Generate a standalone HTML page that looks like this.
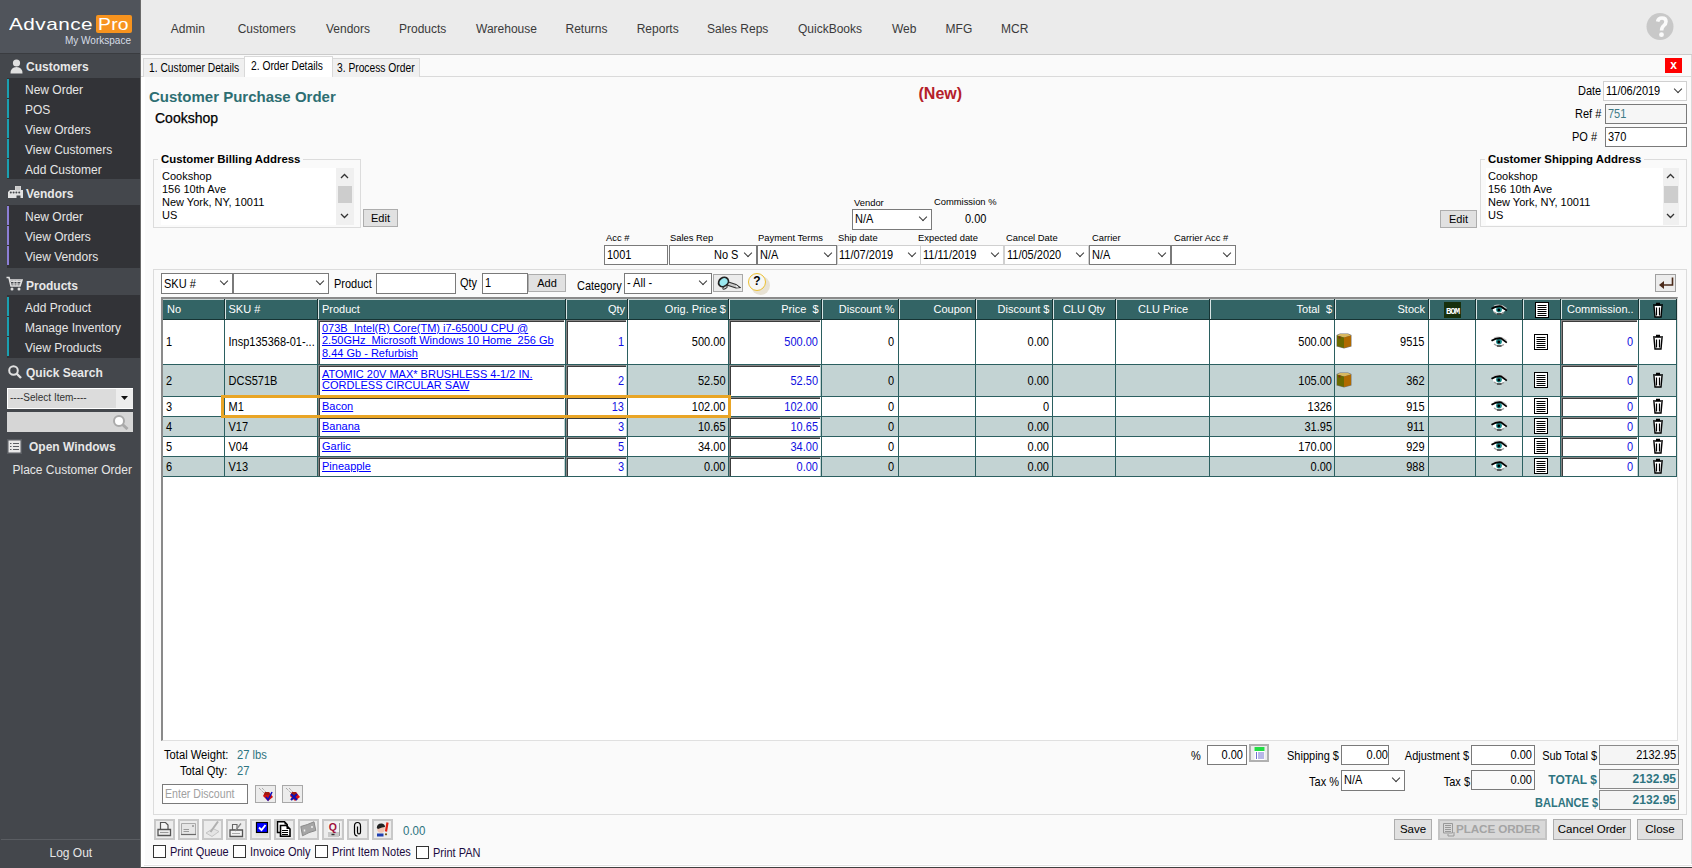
<!DOCTYPE html>
<html><head><meta charset="utf-8">
<style>
*{box-sizing:border-box;margin:0;padding:0}
html,body{width:1692px;height:868px;overflow:hidden;background:#fafafa;font-family:"Liberation Sans",sans-serif;font-size:11px;color:#000}
.a{position:absolute;white-space:nowrap}
/* sidebar */
#sb{position:absolute;left:0;top:0;width:141px;height:868px;background:#44474c;border-right:1px solid #6a6a6a}
#logo{position:absolute;left:0;top:0;width:140px;height:54px;background:#50545b;border-bottom:1px solid #3a3c40}
.sh{position:absolute;left:0;width:140px;color:#e8e8e8;font-weight:bold;font-size:12px}
.sm{position:absolute;left:7px;width:133px;background:#323337}
.si{position:absolute;left:0;width:133px;height:19px;border-left:2px solid #1aa0b0;color:#e6e6e6;font-size:12px;padding-left:16px;padding-top:2px;line-height:19px}
.sm.v .si{border-left-color:#8c7ed6}
/* header */
#hd{position:absolute;left:141px;top:0;width:1551px;height:55px;background:#ebebeb;border-bottom:1px solid #cbcbcb}
.nav{position:absolute;top:21.5px;font-size:12px;color:#3a3a3a}
/* content */
#tabs{position:absolute;left:141px;top:55px;width:1550px;height:22px;background:#fafafa;border-bottom:1px solid #dadada}
.tab{position:absolute;white-space:nowrap;top:3px;height:19px;background:#f0f0f0;border:1px solid #d9d9d9;border-bottom:none;font-size:12px;line-height:18px;padding-left:6px}
.tb{position:absolute;background:#fff;border:1px solid #7a7a7a}
.tbl{position:absolute;background:#fff;border:1px solid #d0d0d0}
.lbl9{position:absolute;font-size:9.4px;color:#000;white-space:nowrap}
.dd{position:absolute;width:6px;height:6px;border-right:1px solid #3a3a3a;border-bottom:1px solid #3a3a3a;transform:rotate(45deg)}
.btn{position:absolute;white-space:nowrap;background:#e1e1e1;border:1px solid #adadad;text-align:center;font-size:11px}
.grp{position:absolute;border:1px solid #dcdcdc}
.cx{display:inline-block;transform:scaleX(.855);transform-origin:0 50%}
.ht{color:#fff;font-size:11px}
.tx{transform:scaleY(1.13) translateY(0.2px)}
.lk{color:#0000ff;font-size:11px}
.lk u{text-decoration:underline;text-underline-offset:1px}
</style></head><body>
<!-- SIDEBAR -->
<div id="sb">
  <div id="logo">
    <div class="a" style="left:8.5px;top:15px;font-size:17px;letter-spacing:0.4px;color:#fff;transform:scaleX(1.22);transform-origin:0 0">Advance</div>
    <div class="a" style="left:96px;top:15px;width:36px;height:18px;background:#f7931e;border-radius:2px"></div>
    <div class="a" style="left:97.5px;top:15px;font-size:17px;letter-spacing:0.2px;color:#fff;transform:scaleX(1.14);transform-origin:0 0">Pro</div>
    <div class="a" style="left:65px;top:35px;font-size:10px;color:#d6dde6">My Workspace</div>
  </div>
  
  <svg class="a" style="left:10px;top:59px" width="13" height="15" viewBox="0 0 13 15"><circle cx="6.5" cy="4" r="3.6" fill="#e0e0e0"/><path d="M0.5 14.5 Q0.5 8 6.5 8 Q12.5 8 12.5 14.5 Z" fill="#e0e0e0"/></svg>
  <svg class="a" style="left:7px;top:185px" width="17" height="14" viewBox="0 0 17 14"><path d="M1 7L3 5H16V13H1Z" fill="#e2e2e2"/><rect x="8" y="1" width="6" height="4.5" fill="#d4d4d4"/><path d="M10 1.5V5M12 1.5V5" stroke="#b8b8b8" stroke-width="0.8"/><circle cx="3.8" cy="7.4" r="1" fill="#45484c"/><circle cx="6.6" cy="7.4" r="1" fill="#45484c"/><circle cx="9.4" cy="7.4" r="1" fill="#45484c"/><circle cx="12.2" cy="7.4" r="1" fill="#45484c"/><rect x="9.5" y="10.5" width="4" height="2.5" fill="#45484c"/></svg>
  <svg class="a" style="left:6px;top:276px" width="17" height="15" viewBox="0 0 17 15"><path d="M0.5 1.5H3L5 10H14L16 4H4" fill="none" stroke="#e0e0e0" stroke-width="1.6"/><path d="M5 5.5H15M5.5 8H14.5M8 4V10M11 4V10" stroke="#e0e0e0" stroke-width="1"/><circle cx="6" cy="13" r="1.5" fill="#e0e0e0"/><circle cx="13" cy="13" r="1.5" fill="#e0e0e0"/></svg>
  <svg class="a" style="left:8px;top:365px" width="14" height="14" viewBox="0 0 14 14"><circle cx="5.5" cy="5.5" r="4.3" fill="none" stroke="#e0e0e0" stroke-width="2"/><path d="M8.5 8.5L13 13" stroke="#e0e0e0" stroke-width="2.4"/></svg>
  <svg class="a" style="left:112px;top:414px;z-index:1" width="17" height="16" viewBox="0 0 17 16"><circle cx="7" cy="7" r="5" fill="#fff" stroke="#aaa" stroke-width="2"/><path d="M10.5 10.5L15.5 15" stroke="#aaa" stroke-width="3"/></svg>
  <svg class="a" style="left:7px;top:439px" width="15" height="15" viewBox="0 0 15 15"><rect width="15" height="15" fill="#5a5d62"/><rect x="1.5" y="1.5" width="12" height="12" fill="#e8e8e8"/><path d="M3 4.5H4.5M6 4.5H12M3 7.5H4.5M6 7.5H12M3 10.5H4.5M6 10.5H12" stroke="#5a5d62" stroke-width="1.2"/></svg>
  <div class="sh" style="top:54px;height:24px"><span class="a" style="left:26px;top:5.5px">Customers</span></div>
  <div class="sm" style="top:78px;height:101px">
    <div class="si" style="top:1px">New Order</div>
    <div class="si" style="top:21px">POS</div>
    <div class="si" style="top:41px">View Orders</div>
    <div class="si" style="top:61px">View Customers</div>
    <div class="si" style="top:81px">Add Customer</div>
  </div>
  <div class="sh" style="top:179px;height:26px"><span class="a" style="left:26px;top:8px">Vendors</span></div>
  <div class="sm v" style="top:205px;height:63px">
    <div class="si" style="top:1px">New Order</div>
    <div class="si" style="top:21px">View Orders</div>
    <div class="si" style="top:41px">View Vendors</div>
  </div>
  <div class="sh" style="top:268px;height:27px"><span class="a" style="left:26px;top:10.5px">Products</span></div>
  <div class="sm" style="top:295px;height:63px">
    <div class="si" style="top:2px">Add Product</div>
    <div class="si" style="top:22px">Manage Inventory</div>
    <div class="si" style="top:42px">View Products</div>
  </div>
  <div class="sh" style="top:358px;height:28px"><span class="a" style="left:26px;top:8px">Quick Search</span></div>
  <div class="a" style="left:7px;top:388px;width:126px;height:21px;background:#dcdcdc;border:1px solid #fff"></div>
  <div class="a" style="left:10px;top:392px;font-size:10px;color:#333">----Select Item----</div>
  <div class="a" style="left:116px;top:389px;width:17px;height:19px;background:#ededed"></div>
  <svg class="a" style="left:121px;top:396px" width="7" height="4" viewBox="0 0 7 4"><path d="M0 0H7L3.5 4Z" fill="#111"/></svg>
  <div class="a" style="left:7px;top:412px;width:126px;height:20px;background:#d6d6d6"></div>
  <div class="sh" style="top:436px;height:22px"><span class="a" style="left:29px;top:4px">Open Windows</span></div>
  <div class="a" style="left:12.5px;top:462.5px;font-size:12px;color:#e6e6e6">Place Customer Order</div>
  <div class="a" style="left:1px;top:839px;width:139px;height:29px;border-top:1px solid #5a5d62"></div>
  <div class="a" style="left:49.5px;top:846px;font-size:12px;color:#e6e6e6">Log Out</div>
</div>
<!-- HEADER -->
<div id="hd">
  <div class="nav" style="left:29.8px">Admin</div>
  <div class="nav" style="left:96.7px">Customers</div>
  <div class="nav" style="left:185.0px">Vendors</div>
  <div class="nav" style="left:258.0px">Products</div>
  <div class="nav" style="left:335.0px">Warehouse</div>
  <div class="nav" style="left:424.5px">Returns</div>
  <div class="nav" style="left:495.7px">Reports</div>
  <div class="nav" style="left:566.0px">Sales Reps</div>
  <div class="nav" style="left:657.0px">QuickBooks</div>
  <div class="nav" style="left:751.0px">Web</div>
  <div class="nav" style="left:804.6px">MFG</div>
  <div class="nav" style="left:860.0px">MCR</div>
  <svg class="a" style="left:1505px;top:13px" width="28" height="28" viewBox="0 0 28 28"><circle cx="14" cy="13.5" r="13.5" fill="#c8c8c8"/><path d="M11.6 8.6 Q12.3 5 16 5 Q20 5 20 8.6 Q20 11 17.8 12.6 Q15.6 14.2 15.6 17.6" fill="none" stroke="#fafafa" stroke-width="3.6"/><circle cx="15.5" cy="21.7" r="2.4" fill="#fafafa"/></svg>
</div>

<!-- TABS -->
<div id="tabs">
  <div class="tab" style="left:2px;width:102px"><span class="cx" style="margin-left:-1px">1. Customer Details</span></div>
  <div class="tab" style="left:103px;top:1px;width:89px;height:21px;background:#fff;z-index:2;line-height:18px"><span class="cx">2. Order Details</span></div>
  <div class="tab" style="left:191px;width:88px;padding-left:4px"><span class="cx">3. Process Order</span></div>
  <div class="a" style="left:1524px;top:3px;width:17px;height:15px;background:#f00;color:#fff;font-size:12px;font-weight:bold;text-align:center;line-height:14px">x</div>
</div>
<!-- FORM HEADER -->
<div class="a" style="left:149px;top:88px;font-size:15px;font-weight:bold;color:#2d6e72">Customer Purchase Order</div>
<div class="a" style="left:155px;top:110px;font-size:14px;color:#000;-webkit-text-stroke:0.25px #000">Cookshop</div>
<div class="a" style="left:918.5px;top:85px;font-size:16px;font-weight:bold;color:#b5202a">(New)</div>
<div class="a tx" style="left:1578px;top:84px;font-size:11px">Date</div>
<div class="tbl" style="left:1603px;top:81px;width:84px;height:20px"></div>
<div class="a tx" style="left:1606px;top:84px;font-size:11px">11/06/2019</div>
<div class="dd" style="left:1675px;top:85.5px"></div>
<div class="a tx" style="left:1575px;top:107px;font-size:11px">Ref #</div>
<div class="tb" style="left:1605px;top:104px;width:82px;height:20px;background:#f6f6f6"></div>
<div class="a tx" style="left:1608px;top:107px;font-size:11px;color:#3e7a86">751</div>
<div class="a tx" style="left:1572px;top:130px;font-size:11px">PO #</div>
<div class="tb" style="left:1605px;top:127px;width:82px;height:20px"></div>
<div class="a tx" style="left:1608px;top:130px;font-size:11px">370</div>

<!-- BILLING -->
<div class="grp" style="left:153px;top:159px;width:208px;height:69px"></div>
<div class="a" style="left:158px;top:153px;padding:0 3px;background:#fafafa;font-size:11.4px;font-weight:bold">Customer Billing Address</div>
<div class="a" style="left:161px;top:168px;width:193px;height:57px;background:#fff"></div>
<div class="a" style="left:162px;top:170px;font-size:11px;line-height:13px">Cookshop<br>156 10th Ave<br>New York, NY, 10011<br>US</div>
<div class="a" style="left:336px;top:168px;width:18px;height:57px;background:#f0f0f0"></div>
<div class="a" style="left:338px;top:186px;width:14px;height:17px;background:#cdcdcd"></div>
<div class="btn" style="left:363px;top:209px;width:35px;height:18px;line-height:16px">Edit</div>
<!-- SHIPPING -->
<div class="grp" style="left:1480px;top:159px;width:207px;height:68px"></div>
<div class="a" style="left:1485px;top:153px;padding:0 3px;background:#fafafa;font-size:11.4px;font-weight:bold">Customer Shipping Address</div>
<div class="a" style="left:1486px;top:168px;width:193px;height:57px;background:#fff"></div>
<div class="a" style="left:1488px;top:170px;font-size:11px;line-height:13px">Cookshop<br>156 10th Ave<br>New York, NY, 10011<br>US</div>
<div class="a" style="left:1663px;top:168px;width:16px;height:57px;background:#f0f0f0"></div>
<div class="a" style="left:1664px;top:186px;width:14px;height:17px;background:#cdcdcd"></div>
<div class="btn" style="left:1440px;top:210px;width:37px;height:18px;line-height:16px">Edit</div>

<svg class="a" style="left:340px;top:173px" width="9" height="6" viewBox="0 0 9 6"><path d="M1 5L4.5 1.5L8 5" fill="none" stroke="#333" stroke-width="1.3"/></svg>
<svg class="a" style="left:340px;top:213px" width="9" height="6" viewBox="0 0 9 6"><path d="M1 1L4.5 4.5L8 1" fill="none" stroke="#333" stroke-width="1.3"/></svg>
<svg class="a" style="left:1666px;top:173px" width="9" height="6" viewBox="0 0 9 6"><path d="M1 5L4.5 1.5L8 5" fill="none" stroke="#333" stroke-width="1.3"/></svg>
<svg class="a" style="left:1666px;top:213px" width="9" height="6" viewBox="0 0 9 6"><path d="M1 1L4.5 4.5L8 1" fill="none" stroke="#333" stroke-width="1.3"/></svg>
<!-- VENDOR -->
<div class="lbl9" style="left:854px;top:197px">Vendor</div>
<div class="tb" style="left:852px;top:209px;width:80px;height:21px"></div>
<div class="a tx" style="left:855px;top:212px">N/A</div>
<div class="dd" style="left:920px;top:214.0px"></div>
<div class="lbl9" style="left:934px;top:196px">Commission %</div>
<div class="a tx" style="left:965px;top:212px">0.00</div>
<!-- FIELD ROW -->
<div class="lbl9" style="left:606px;top:232px">Acc #</div>
<div class="tb" style="left:604px;top:245px;width:64px;height:20px"></div>
<div class="a tx" style="left:607px;top:248px">1001</div>
<div class="lbl9" style="left:670px;top:232px">Sales Rep</div>
<div class="tb" style="left:669px;top:245px;width:88px;height:20px"></div>
<div class="a tx" style="left:714px;top:248px">No S</div>
<div class="dd" style="left:745px;top:249.5px"></div>
<div class="lbl9" style="left:758px;top:232px">Payment Terms</div>
<div class="tb" style="left:757px;top:245px;width:80px;height:20px"></div>
<div class="a tx" style="left:760px;top:248px">N/A</div>
<div class="dd" style="left:825px;top:249.5px"></div>
<div class="lbl9" style="left:838px;top:232px">Ship date</div>
<div class="tbl" style="left:837px;top:245px;width:84px;height:20px"></div>
<div class="a tx" style="left:839px;top:248px">11/07/2019</div>
<div class="dd" style="left:909px;top:249.5px"></div>
<div class="lbl9" style="left:918px;top:232px">Expected date</div>
<div class="tbl" style="left:920px;top:245px;width:84px;height:20px"></div>
<div class="a tx" style="left:923px;top:248px">11/11/2019</div>
<div class="dd" style="left:992px;top:249.5px"></div>
<div class="lbl9" style="left:1006px;top:232px">Cancel Date</div>
<div class="tbl" style="left:1004px;top:245px;width:85px;height:20px"></div>
<div class="a tx" style="left:1007px;top:248px">11/05/2020</div>
<div class="dd" style="left:1077px;top:249.5px"></div>
<div class="lbl9" style="left:1092px;top:232px">Carrier</div>
<div class="tb" style="left:1089px;top:245px;width:82px;height:20px"></div>
<div class="a tx" style="left:1092px;top:248px">N/A</div>
<div class="dd" style="left:1159px;top:249.5px"></div>
<div class="lbl9" style="left:1174px;top:232px">Carrier Acc #</div>
<div class="tb" style="left:1171px;top:245px;width:65px;height:20px"></div>
<div class="dd" style="left:1224px;top:249.5px"></div>
<!-- TOOLBAR GROUP -->
<div class="grp" style="left:153px;top:269px;width:1534px;height:546px"></div>
<div class="tb" style="left:161px;top:273px;width:72px;height:21px"></div>
<div class="a tx" style="left:164px;top:277px">SKU #</div>
<div class="dd" style="left:221px;top:278.0px"></div>
<div class="tb" style="left:233px;top:273px;width:96px;height:21px"></div>
<div class="dd" style="left:317px;top:278.0px"></div>
<div class="a tx" style="left:334px;top:277px">Product</div>
<div class="tb" style="left:376px;top:273px;width:80px;height:21px"></div>
<div class="a tx" style="left:460px;top:276px">Qty</div>
<div class="tb" style="left:482px;top:273px;width:46px;height:21px"></div>
<div class="a tx" style="left:485px;top:276px">1</div>
<div class="btn" style="left:528px;top:274px;width:38px;height:18px;line-height:16px">Add</div>
<div class="a tx" style="left:577px;top:279px">Category</div>
<div class="tb" style="left:624px;top:273px;width:88px;height:21px"></div>
<div class="a tx" style="left:627px;top:276px">- All -</div>
<div class="dd" style="left:700px;top:278.0px"></div>
<div class="btn" style="left:713px;top:274px;width:30px;height:18px;border:1px solid #a8a8a8;background:#ececec"><svg style="position:absolute;left:3px;top:1px" width="24" height="15" viewBox="0 0 24 15"><path d="M10 5.5L19 8.5L23 11.5L19 12L10 9Z" fill="#c8c8c8" stroke="#333" stroke-width="1.1"/><path d="M19 9L22 11.5L19.5 11.5Z" fill="#fff"/><ellipse cx="6.5" cy="6" rx="5.2" ry="4.3" transform="rotate(-35 6.5 6)" fill="#9be8f0" stroke="#222" stroke-width="1.7"/><ellipse cx="8" cy="11.5" rx="2.5" ry="1.2" transform="rotate(-30 8 11.5)" fill="#ddd" stroke="#333" stroke-width="1"/></svg></div>
<div class="a" style="left:751px;top:276px;width:19px;height:19px;border-radius:50%;background:#e8e2d4"></div><div class="a" style="left:748px;top:273px;width:18px;height:18px;border-radius:50%;border:1.5px solid #ecc032;background:#f6f6f6;font-size:12px;font-weight:bold;text-align:center;line-height:15px">?</div>
<div class="btn" style="left:1655px;top:274px;width:21px;height:18px;border:1px solid #a0a0a0;background:#ececec"><svg style="position:absolute;left:2px;top:1px" width="16" height="14" viewBox="0 0 16 14"><path d="M14.5 1.5V9H5" fill="none" stroke="#4a2a1a" stroke-width="1.6"/><path d="M1 9L6 5V13Z" fill="#4a2a1a"/></svg></div>

<!-- BOTTOM -->
<div class="a tx" style="left:164px;top:748px;font-size:11.2px">Total Weight:</div>
<div class="a tx" style="left:237px;top:748px;font-size:11.2px;color:#2e7480">27 lbs</div>
<div class="a tx" style="left:180px;top:764px;font-size:11.2px">Total Qty:</div>
<div class="a tx" style="left:237px;top:764px;font-size:11.2px;color:#2e7480">27</div>
<div class="tb" style="left:162px;top:784px;width:86px;height:20px"></div>
<div class="a tx" style="left:165px;top:787px;font-size:10.6px;color:#a0a0a0">Enter Discount</div>
<div class="btn" style="left:255px;top:785px;width:21px;height:18px;border:1px solid #a8a8a8;background:#ececec"><svg style="position:absolute;left:2px;top:1px" width="16" height="15" viewBox="0 0 16 15"><path d="M1 1L6 6M4 1L9 6" stroke="#777" stroke-width="0.8" stroke-dasharray="1 1"/><path d="M7 5L11 5L15 10L10 14L5 9Z" fill="#d01010"/><path d="M7 5L11 5L12 8L6 8Z" fill="#a01a10"/><path d="M8 10L10 13L14 5" fill="none" stroke="#1010c0" stroke-width="1.6"/></svg></div>
<div class="btn" style="left:282px;top:785px;width:21px;height:18px;border:1px solid #a8a8a8;background:#ececec"><svg style="position:absolute;left:2px;top:1px" width="16" height="15" viewBox="0 0 16 15"><path d="M1 1L6 6M4 1L9 6" stroke="#777" stroke-width="0.8" stroke-dasharray="1 1"/><path d="M7 5L11 5L15 10L10 14L5 9Z" fill="#e01010"/><path d="M7 5L11 5L12 8L6 8Z" fill="#a01a10"/><path d="M6 7L12 13M12 7L6 13" stroke="#1010b0" stroke-width="2.2"/></svg></div>
<div class="a tx" style="left:1191px;top:749px">%</div>
<div class="tb" style="left:1207px;top:745px;width:40px;height:20px"></div>
<div class="a tx" style="right:449px;top:748px">0.00</div>
<div class="btn" style="left:1249px;top:744px;width:20px;height:18px;border:2px solid #b0b0b0;background:#ececec"><svg style="position:absolute;left:3px;top:1px" width="12" height="13" viewBox="0 0 12 13"><rect x="0.5" y="0" width="10" height="13" fill="#fff"/><rect x="0.5" y="0" width="10" height="4" fill="#22dd44"/><path d="M2.5 5V12M5 5V12M7 5V12M9 5V12" stroke="#7070d0" stroke-width="1"/></svg></div>
<div class="a tx" style="right:353px;top:749px">Shipping $</div>
<div class="tb" style="left:1341px;top:745px;width:48px;height:20px"></div>
<div class="a tx" style="right:304px;top:748px">0.00</div>
<div class="a tx" style="right:223px;top:749px">Adjustment $</div>
<div class="tb" style="left:1471px;top:745px;width:64px;height:20px"></div>
<div class="a tx" style="right:160px;top:748px">0.00</div>
<div class="a tx" style="right:95px;top:749px">Sub Total $</div>
<div class="tb" style="left:1599px;top:745px;width:80px;height:20px;background:#f5f5f5;border-color:#8a8a8a"></div>
<div class="a tx" style="right:16px;top:748px">2132.95</div>
<div class="a tx" style="right:353px;top:775px">Tax %</div>
<div class="tb" style="left:1341px;top:770px;width:64px;height:21px"></div>
<div class="a tx" style="left:1344px;top:773px">N/A</div>
<div class="dd" style="left:1393px;top:775.0px"></div>
<div class="a tx" style="right:222px;top:775px">Tax $</div>
<div class="tb" style="left:1471px;top:770px;width:64px;height:20px;background:#fafafa"></div>
<div class="a tx" style="right:160px;top:773px">0.00</div>
<div class="a tx" style="right:95px;top:772px;font-size:12px;font-weight:bold;color:#2e7480">TOTAL $</div>
<div class="tb" style="left:1599px;top:769px;width:80px;height:20px;background:#f5f5f5;border-color:#8a8a8a"></div>
<div class="a tx" style="right:16px;top:771px;font-size:12px;font-weight:bold;color:#2e7480">2132.95</div>
<div class="a tx" style="right:94px;top:796px;font-size:11px;font-weight:bold;color:#2e7480">BALANCE $</div>
<div class="tb" style="left:1599px;top:790px;width:80px;height:20px;background:#f5f5f5;border-color:#8a8a8a"></div>
<div class="a tx" style="right:16px;top:792px;font-size:12px;font-weight:bold;color:#2e7480">2132.95</div>
<!-- BUTTONS -->
<div class="btn" style="left:1394px;top:819px;width:38px;height:21px;line-height:19px;font-size:11.5px">Save</div>
<div class="btn" style="left:1438px;top:819px;width:109px;height:21px;line-height:15px;border:2px solid #c4c4c4;background:#d8d8d8;color:#a4a4a4;font-weight:bold;font-size:11.7px;text-align:left;padding-left:16px;letter-spacing:-0.1px"><svg style="position:absolute;left:2px;top:1px" width="14" height="16" viewBox="0 0 14 16"><path d="M1.5 1.5H10.5V11H1.5Z" fill="none" stroke="#999" stroke-width="1"/><path d="M3 3.5H9M3 5.5H9M3 7.5H9M3 9.5H9" stroke="#999" stroke-width="1"/><path d="M6 12V14H12V10" fill="none" stroke="#999" stroke-width="1"/></svg>PLACE ORDER</div>
<div class="btn" style="left:1553px;top:819px;width:78px;height:21px;line-height:19px;font-size:11.5px">Cancel Order</div>
<div class="btn" style="left:1637px;top:819px;width:46px;height:21px;line-height:19px;font-size:11.5px">Close</div>
<!-- TOOLBAR ICONS -->
<div class="a" style="left:154px;top:819px;width:21px;height:21px;background:#ececec;border:2px solid #c8c8c8"><svg style="position:absolute;left:0px;top:0px" width="17" height="17" viewBox="0 0 17 17"><path d="M4.5 1.5H9.5L12 4V8.5H4.5Z" fill="#f6f6f6" stroke="#555" stroke-width="1.2"/><path d="M2 8.5H14.5V14.5H2Z" fill="#f2f2f2" stroke="#555" stroke-width="1.3"/><path d="M4 11.5H12.5" fill="none" stroke="#9a9a9a" stroke-width="1.2"/></svg></div>
<div class="a" style="left:178px;top:819px;width:21px;height:21px;background:#ececec;border:2px solid #c8c8c8"><svg style="position:absolute;left:0px;top:0px" width="17" height="17" viewBox="0 0 17 17"><path d="M1.5 2.5H15.5V13.5H1.5Z" fill="#e6e6e6" stroke="#aaa" stroke-width="1"/><path d="M1 13.5H16" fill="none" stroke="#6a6a6a" stroke-width="1.2"/><path d="M3.5 8.5H9M3.5 10.5H9" fill="none" stroke="#9a9a9a" stroke-width="1.1"/><rect x="12" y="4" width="2" height="2" fill="#aaa"/></svg></div>
<div class="a" style="left:202px;top:819px;width:21px;height:21px;background:#ececec;border:2px solid #c8c8c8"><svg style="position:absolute;left:0px;top:0px" width="17" height="17" viewBox="0 0 17 17"><path d="M2 12L8 15.5L15 10.5L9 7.5Z" fill="#e4e4e4" stroke="#c4c4c4" stroke-width="1"/><path d="M6.5 11L14 0.5" fill="none" stroke="#b0b0b0" stroke-width="2"/></svg></div>
<div class="a" style="left:226px;top:819px;width:21px;height:21px;background:#ececec;border:2px solid #c8c8c8"><svg style="position:absolute;left:0px;top:0px" width="17" height="17" viewBox="0 0 17 17"><path d="M4.5 3.5H9V9H4.5Z" fill="#f2f2f2" stroke="#666" stroke-width="1.1"/><path d="M2 9H14.5V15.5H2Z" fill="#f2f2f2" stroke="#555" stroke-width="1.3"/><path d="M7 10L13 2.5" fill="none" stroke="#888" stroke-width="1.3"/><path d="M4 12.5H12" fill="none" stroke="#aaa" stroke-width="1"/></svg></div>
<div class="a" style="left:250px;top:819px;width:21px;height:21px;background:#ececec;border:2px solid #c8c8c8"><svg style="position:absolute;left:0px;top:0px" width="17" height="17" viewBox="0 0 17 17"><rect x="4.5" y="1.5" width="11" height="10" fill="#0000ff" stroke="#000" stroke-width="1.2"/><path d="M7 6.5L9.5 9L13.5 4" fill="none" stroke="#fff" stroke-width="1.9"/><path d="M3.5 12.5H16V15.5H3.5Z" fill="#e4e4dc"/></svg></div>
<div class="a" style="left:274px;top:819px;width:21px;height:21px;background:#ececec;border:2px solid #c8c8c8"><svg style="position:absolute;left:0px;top:0px" width="17" height="17" viewBox="0 0 17 17"><path d="M1.5 0.8H8.5L11.2 3.5V11.5H1.5Z" fill="#fff" stroke="#000" stroke-width="1.5"/><path d="M8.5 0.8L11.2 3.5H8.5Z" fill="#000"/><path d="M4.5 4.5H10.5L14 8V15.2H4.5Z" fill="#fff" stroke="#000" stroke-width="1.6"/><path d="M10.5 4.5L14 8H10.5Z" fill="#000"/><path d="M6 9.5H12M6 11.5H12M6 13.5H12" fill="none" stroke="#000" stroke-width="1.2"/></svg></div>
<div class="a" style="left:298px;top:819px;width:21px;height:21px;background:#ececec;border:2px solid #c8c8c8"><svg style="position:absolute;left:0px;top:0px" width="17" height="17" viewBox="0 0 17 17"><path d="M0.8 5.5Q7 4 14 0.8L15.8 9.5Q9 11 2.5 14.8Z" fill="#a6a6a6" stroke="#8a8a8a" stroke-width="1"/><path d="M4.5 8.5V10.5M12 5V7" fill="none" stroke="#eee" stroke-width="1.5"/></svg></div>
<div class="a" style="left:322px;top:819px;width:22px;height:21px;background:#ececec;border:2px solid #c8c8c8"><svg style="position:absolute;left:0px;top:0px" width="17" height="17" viewBox="0 0 17 17"><rect x="4" y="1" width="13" height="15" fill="#f4f4f4"/><rect x="4" y="11" width="11" height="5" fill="#c8c8c8"/><text x="8.8" y="10" font-family="Liberation Sans" font-size="10.5" font-weight="bold" fill="#a0103a" text-anchor="middle">Q</text><path d="M15.5 2V15" fill="none" stroke="#999" stroke-width="1"/><path d="M7.5 13.5H10.5" fill="none" stroke="#333" stroke-width="1.4"/></svg></div>
<div class="a" style="left:347px;top:819px;width:22px;height:21px;background:#ececec;border:2px solid #c8c8c8"><svg style="position:absolute;left:0px;top:0px" width="17" height="17" viewBox="0 0 17 17"><path d="M8.5 15Q5.5 15 5.5 11.5V5Q5.5 1.5 8.5 1.5Q11.5 1.5 11.5 5V11Q11.5 13 10 13Q8.5 13 8.5 11V5.5" fill="none" stroke="#000" stroke-width="1.2"/></svg></div>
<div class="a" style="left:372px;top:819px;width:21px;height:21px;background:#ececec;border:2px solid #c8c8c8"><svg style="position:absolute;left:0px;top:0px" width="17" height="17" viewBox="0 0 17 17"><circle cx="7" cy="8" r="3.8" fill="#f0c4b4"/><path d="M2.8 7Q3 2 8 2.5Q11 3 11 6L8 6.5L4 8Z" fill="#222"/><path d="M3 12.5H9.5V15.5H3Z" fill="#1f3fb0"/><path d="M13.5 1.5L12 10.5" fill="none" stroke="#e02010" stroke-width="2.2"/><circle cx="12" cy="13.3" r="1.1" fill="#705010"/></svg></div>
<div class="a tx" style="left:403px;top:824px;font-size:11.5px;color:#2e7480">0.00</div>
<div class="a" style="left:153px;top:845px;width:13px;height:13px;background:#fff;border:1px solid #333"></div>
<div class="a tx" style="left:170px;top:845px;font-size:11px;color:#1a0a40">Print Queue</div>
<div class="a" style="left:233px;top:845px;width:13px;height:13px;background:#fff;border:1px solid #333"></div>
<div class="a tx" style="left:250px;top:845px;font-size:11px;color:#1a0a40">Invoice Only</div>
<div class="a" style="left:315px;top:845px;width:13px;height:13px;background:#fff;border:1px solid #333"></div>
<div class="a tx" style="left:332px;top:845px;font-size:11px;color:#1a0a40">Print Item Notes</div>
<div class="a" style="left:416px;top:846px;width:13px;height:13px;background:#fff;border:1px solid #333"></div>
<div class="a tx" style="left:433px;top:846px;font-size:11px;color:#1a0a40">Print PAN</div>
<div class="a" style="left:141px;top:864px;width:1551px;height:4px;background:#fff;border-bottom:1px solid #404040"><div style="position:absolute;left:3px;right:0;top:1px;height:1px;background:#e3e3e3"></div></div>
<div class="a" style="left:141px;top:77px;width:4px;height:787px;background:#fff"></div>
<div class="a" style="left:1691px;top:55px;width:1px;height:809px;background:#dadada"></div>
<!--TABLE-->
<div class="a" style="left:161px;top:297px;width:1517px;height:444px;background:#fff;border-top:2px solid #8a8a8a;border-left:2px solid #8a8a8a;border-right:1px solid #e0e0e0;border-bottom:1px solid #e0e0e0"></div>
<div class="a" style="left:163px;top:299px;width:1514px;height:20px;background:#336465;border-top:1px solid #c8d4d4"></div>
<div class="a" style="left:163px;top:320px;width:1514px;height:44px;background:#fff"></div>
<div class="a" style="left:163px;top:365px;width:1514px;height:31px;background:#c3d3d3"></div>
<div class="a" style="left:163px;top:397px;width:1514px;height:19px;background:#fff"></div>
<div class="a" style="left:163px;top:417px;width:1514px;height:19px;background:#c3d3d3"></div>
<div class="a" style="left:163px;top:437px;width:1514px;height:19px;background:#fff"></div>
<div class="a" style="left:163px;top:457px;width:1514px;height:19px;background:#c3d3d3"></div>
<div class="a" style="left:318px;top:320px;width:246px;height:44px;background:#fff;border-top:1px solid #848484;border-left:1px solid #848484;box-shadow:inset 1px 1px 0 #3c3c3c"></div>
<div class="a" style="left:566px;top:320px;width:60px;height:44px;background:#fff;border-top:1px solid #848484;border-left:1px solid #848484;box-shadow:inset 1px 1px 0 #3c3c3c"></div>
<div class="a" style="left:729px;top:320px;width:91px;height:44px;background:#fff;border-top:1px solid #848484;border-left:1px solid #848484;box-shadow:inset 1px 1px 0 #3c3c3c"></div>
<div class="a" style="left:1561px;top:320px;width:76px;height:44px;background:#fff;border-top:1px solid #848484;border-left:1px solid #848484;box-shadow:inset 1px 1px 0 #3c3c3c"></div>
<div class="a" style="left:318px;top:365px;width:246px;height:31px;background:#fff;border-top:1px solid #848484;border-left:1px solid #848484;box-shadow:inset 1px 1px 0 #3c3c3c"></div>
<div class="a" style="left:566px;top:365px;width:60px;height:31px;background:#fff;border-top:1px solid #848484;border-left:1px solid #848484;box-shadow:inset 1px 1px 0 #3c3c3c"></div>
<div class="a" style="left:729px;top:365px;width:91px;height:31px;background:#fff;border-top:1px solid #848484;border-left:1px solid #848484;box-shadow:inset 1px 1px 0 #3c3c3c"></div>
<div class="a" style="left:1561px;top:365px;width:76px;height:31px;background:#fff;border-top:1px solid #848484;border-left:1px solid #848484;box-shadow:inset 1px 1px 0 #3c3c3c"></div>
<div class="a" style="left:318px;top:397px;width:246px;height:19px;background:#fff;border-top:1px solid #848484;border-left:1px solid #848484;box-shadow:inset 1px 1px 0 #3c3c3c"></div>
<div class="a" style="left:566px;top:397px;width:60px;height:19px;background:#fff;border-top:1px solid #848484;border-left:1px solid #848484;box-shadow:inset 1px 1px 0 #3c3c3c"></div>
<div class="a" style="left:729px;top:397px;width:91px;height:19px;background:#fff;border-top:1px solid #848484;border-left:1px solid #848484;box-shadow:inset 1px 1px 0 #3c3c3c"></div>
<div class="a" style="left:1561px;top:397px;width:76px;height:19px;background:#fff;border-top:1px solid #848484;border-left:1px solid #848484;box-shadow:inset 1px 1px 0 #3c3c3c"></div>
<div class="a" style="left:318px;top:417px;width:246px;height:19px;background:#fff;border-top:1px solid #848484;border-left:1px solid #848484;box-shadow:inset 1px 1px 0 #3c3c3c"></div>
<div class="a" style="left:566px;top:417px;width:60px;height:19px;background:#fff;border-top:1px solid #848484;border-left:1px solid #848484;box-shadow:inset 1px 1px 0 #3c3c3c"></div>
<div class="a" style="left:729px;top:417px;width:91px;height:19px;background:#fff;border-top:1px solid #848484;border-left:1px solid #848484;box-shadow:inset 1px 1px 0 #3c3c3c"></div>
<div class="a" style="left:1561px;top:417px;width:76px;height:19px;background:#fff;border-top:1px solid #848484;border-left:1px solid #848484;box-shadow:inset 1px 1px 0 #3c3c3c"></div>
<div class="a" style="left:318px;top:437px;width:246px;height:19px;background:#fff;border-top:1px solid #848484;border-left:1px solid #848484;box-shadow:inset 1px 1px 0 #3c3c3c"></div>
<div class="a" style="left:566px;top:437px;width:60px;height:19px;background:#fff;border-top:1px solid #848484;border-left:1px solid #848484;box-shadow:inset 1px 1px 0 #3c3c3c"></div>
<div class="a" style="left:729px;top:437px;width:91px;height:19px;background:#fff;border-top:1px solid #848484;border-left:1px solid #848484;box-shadow:inset 1px 1px 0 #3c3c3c"></div>
<div class="a" style="left:1561px;top:437px;width:76px;height:19px;background:#fff;border-top:1px solid #848484;border-left:1px solid #848484;box-shadow:inset 1px 1px 0 #3c3c3c"></div>
<div class="a" style="left:318px;top:457px;width:246px;height:19px;background:#fff;border-top:1px solid #848484;border-left:1px solid #848484;box-shadow:inset 1px 1px 0 #3c3c3c"></div>
<div class="a" style="left:566px;top:457px;width:60px;height:19px;background:#fff;border-top:1px solid #848484;border-left:1px solid #848484;box-shadow:inset 1px 1px 0 #3c3c3c"></div>
<div class="a" style="left:729px;top:457px;width:91px;height:19px;background:#fff;border-top:1px solid #848484;border-left:1px solid #848484;box-shadow:inset 1px 1px 0 #3c3c3c"></div>
<div class="a" style="left:1561px;top:457px;width:76px;height:19px;background:#fff;border-top:1px solid #848484;border-left:1px solid #848484;box-shadow:inset 1px 1px 0 #3c3c3c"></div>
<div class="a" style="left:163px;top:319px;width:1514px;height:1px;background:#163434"></div>
<div class="a" style="left:163px;top:364px;width:1514px;height:1px;background:#2b5f60"></div>
<div class="a" style="left:163px;top:396px;width:1514px;height:1px;background:#2b5f60"></div>
<div class="a" style="left:163px;top:416px;width:1514px;height:1px;background:#2b5f60"></div>
<div class="a" style="left:163px;top:436px;width:1514px;height:1px;background:#2b5f60"></div>
<div class="a" style="left:163px;top:456px;width:1514px;height:1px;background:#2b5f60"></div>
<div class="a" style="left:163px;top:476px;width:1514px;height:1px;background:#2b5f60"></div>
<div class="a" style="left:224px;top:320px;width:1px;height:157px;background:#2b5f60"></div>
<div class="a" style="left:224px;top:299px;width:1px;height:21px;background:#163434"></div>
<div class="a" style="left:225px;top:300px;width:1px;height:19px;background:#d8e4e4"></div>
<div class="a" style="left:317px;top:320px;width:1px;height:157px;background:#2b5f60"></div>
<div class="a" style="left:317px;top:299px;width:1px;height:21px;background:#163434"></div>
<div class="a" style="left:318px;top:300px;width:1px;height:19px;background:#d8e4e4"></div>
<div class="a" style="left:565px;top:320px;width:1px;height:157px;background:#2b5f60"></div>
<div class="a" style="left:565px;top:299px;width:1px;height:21px;background:#163434"></div>
<div class="a" style="left:566px;top:300px;width:1px;height:19px;background:#d8e4e4"></div>
<div class="a" style="left:627px;top:320px;width:1px;height:157px;background:#2b5f60"></div>
<div class="a" style="left:627px;top:299px;width:1px;height:21px;background:#163434"></div>
<div class="a" style="left:628px;top:300px;width:1px;height:19px;background:#d8e4e4"></div>
<div class="a" style="left:728px;top:320px;width:1px;height:157px;background:#2b5f60"></div>
<div class="a" style="left:728px;top:299px;width:1px;height:21px;background:#163434"></div>
<div class="a" style="left:729px;top:300px;width:1px;height:19px;background:#d8e4e4"></div>
<div class="a" style="left:821px;top:320px;width:1px;height:157px;background:#2b5f60"></div>
<div class="a" style="left:821px;top:299px;width:1px;height:21px;background:#163434"></div>
<div class="a" style="left:822px;top:300px;width:1px;height:19px;background:#d8e4e4"></div>
<div class="a" style="left:898px;top:320px;width:1px;height:157px;background:#2b5f60"></div>
<div class="a" style="left:898px;top:299px;width:1px;height:21px;background:#163434"></div>
<div class="a" style="left:899px;top:300px;width:1px;height:19px;background:#d8e4e4"></div>
<div class="a" style="left:975px;top:320px;width:1px;height:157px;background:#2b5f60"></div>
<div class="a" style="left:975px;top:299px;width:1px;height:21px;background:#163434"></div>
<div class="a" style="left:976px;top:300px;width:1px;height:19px;background:#d8e4e4"></div>
<div class="a" style="left:1052px;top:320px;width:1px;height:157px;background:#2b5f60"></div>
<div class="a" style="left:1052px;top:299px;width:1px;height:21px;background:#163434"></div>
<div class="a" style="left:1053px;top:300px;width:1px;height:19px;background:#d8e4e4"></div>
<div class="a" style="left:1115px;top:320px;width:1px;height:157px;background:#2b5f60"></div>
<div class="a" style="left:1115px;top:299px;width:1px;height:21px;background:#163434"></div>
<div class="a" style="left:1116px;top:300px;width:1px;height:19px;background:#d8e4e4"></div>
<div class="a" style="left:1209px;top:320px;width:1px;height:157px;background:#2b5f60"></div>
<div class="a" style="left:1209px;top:299px;width:1px;height:21px;background:#163434"></div>
<div class="a" style="left:1210px;top:300px;width:1px;height:19px;background:#d8e4e4"></div>
<div class="a" style="left:1334px;top:320px;width:1px;height:157px;background:#2b5f60"></div>
<div class="a" style="left:1334px;top:299px;width:1px;height:21px;background:#163434"></div>
<div class="a" style="left:1335px;top:300px;width:1px;height:19px;background:#d8e4e4"></div>
<div class="a" style="left:1428px;top:320px;width:1px;height:157px;background:#2b5f60"></div>
<div class="a" style="left:1428px;top:299px;width:1px;height:21px;background:#163434"></div>
<div class="a" style="left:1429px;top:300px;width:1px;height:19px;background:#d8e4e4"></div>
<div class="a" style="left:1475px;top:320px;width:1px;height:157px;background:#2b5f60"></div>
<div class="a" style="left:1475px;top:299px;width:1px;height:21px;background:#163434"></div>
<div class="a" style="left:1476px;top:300px;width:1px;height:19px;background:#d8e4e4"></div>
<div class="a" style="left:1522px;top:320px;width:1px;height:157px;background:#2b5f60"></div>
<div class="a" style="left:1522px;top:299px;width:1px;height:21px;background:#163434"></div>
<div class="a" style="left:1523px;top:300px;width:1px;height:19px;background:#d8e4e4"></div>
<div class="a" style="left:1560px;top:320px;width:1px;height:157px;background:#2b5f60"></div>
<div class="a" style="left:1560px;top:299px;width:1px;height:21px;background:#163434"></div>
<div class="a" style="left:1561px;top:300px;width:1px;height:19px;background:#d8e4e4"></div>
<div class="a" style="left:1638px;top:320px;width:1px;height:157px;background:#2b5f60"></div>
<div class="a" style="left:1638px;top:299px;width:1px;height:21px;background:#163434"></div>
<div class="a" style="left:1639px;top:300px;width:1px;height:19px;background:#d8e4e4"></div>
<div class="a" style="left:1676px;top:320px;width:1px;height:157px;background:#2b5f60"></div>
<div class="a" style="left:1676px;top:299px;width:1px;height:21px;background:#163434"></div>
<div class="a ht" style="left:167px;top:303px">No</div>
<div class="a ht" style="left:228.5px;top:303px">SKU #</div>
<div class="a ht" style="left:322px;top:303px">Product</div>
<div class="a ht" style="right:1067px;top:303px">Qty</div>
<div class="a ht" style="right:966px;top:303px">Orig. Price $</div>
<div class="a ht" style="right:873.5px;top:303px">Price&nbsp; $</div>
<div class="a ht" style="right:797.5px;top:303px">Discount %</div>
<div class="a ht" style="right:720px;top:303px">Coupon</div>
<div class="a ht" style="right:642.5px;top:303px">Discount $</div>
<div class="a ht" style="left:1024px;width:120px;text-align:center;top:303px">CLU Qty</div>
<div class="a ht" style="left:1103px;width:120px;text-align:center;top:303px">CLU Price</div>
<div class="a ht" style="right:360px;top:303px">Total&nbsp; $</div>
<div class="a ht" style="right:267px;top:303px">Stock</div>
<div class="a ht" style="left:1567px;top:303px">Commission..</div>
<div class="a tx" style="left:166px;top:334.5px;color:#000">1</div>
<div class="a tx" style="left:228.5px;top:334.5px;color:#000">Insp135368-01-...</div>
<div class="a lk" style="left:322px;top:321.8px;line-height:12.5px"><u>073B&nbsp; Intel(R) Core(TM) i7-6500U CPU @</u><br><u>2.50GHz&nbsp; Microsoft Windows 10 Home&nbsp; 256 Gb</u><br><u>8.44 Gb - Refurbish</u></div>
<div class="a tx" style="right:1068px;top:334.5px;color:#1010e0">1</div>
<div class="a tx" style="right:966.5px;top:334.5px;color:#000">500.00</div>
<div class="a tx" style="right:874px;top:334.5px;color:#1010e0">500.00</div>
<div class="a tx" style="right:798px;top:334.5px;color:#000">0</div>
<div class="a tx" style="right:643px;top:334.5px;color:#000">0.00</div>
<div class="a tx" style="right:360px;top:334.5px;color:#000">500.00</div>
<div class="a tx" style="right:267.5px;top:334.5px;color:#000">9515</div>
<div class="a tx" style="right:59px;top:334.5px;color:#1010e0">0</div>
<div class="a" style="left:1336px;top:333px;width:16px;height:16px"><svg width="16" height="16" viewBox="0 0 16 16"><path d="M0.5 2 L4 0.5 L12 0.5 L15.5 2 L15.5 13.5 L8 15.5 L0.5 13.5 Z" fill="#777"/><path d="M1 2.5 L4 1 L12 1 L15 2.5 L8 4.5 Z" fill="#d8b860"/><path d="M8 4.5 L15 2.5 L15 13 L8 15 Z" fill="#b06a00"/><path d="M1 2.5 L8 4.5 L8 15 L1 13 Z" fill="#6a6a00"/><rect x="2.5" y="3.5" width="2" height="2" fill="#803010"/></svg></div>
<div class="a tx" style="left:166px;top:374.0px;color:#000">2</div>
<div class="a tx" style="left:228.5px;top:374.0px;color:#000">DCS571B</div>
<div class="a lk" style="left:322px;top:368.5px;line-height:11.5px"><u>ATOMIC 20V MAX* BRUSHLESS 4-1/2 IN.</u><br><u>CORDLESS CIRCULAR SAW</u></div>
<div class="a tx" style="right:1068px;top:374.0px;color:#1010e0">2</div>
<div class="a tx" style="right:966.5px;top:374.0px;color:#000">52.50</div>
<div class="a tx" style="right:874px;top:374.0px;color:#1010e0">52.50</div>
<div class="a tx" style="right:798px;top:374.0px;color:#000">0</div>
<div class="a tx" style="right:643px;top:374.0px;color:#000">0.00</div>
<div class="a tx" style="right:360px;top:374.0px;color:#000">105.00</div>
<div class="a tx" style="right:267.5px;top:374.0px;color:#000">362</div>
<div class="a tx" style="right:59px;top:374.0px;color:#1010e0">0</div>
<div class="a" style="left:1336px;top:372px;width:16px;height:16px"><svg width="16" height="16" viewBox="0 0 16 16"><path d="M0.5 2 L4 0.5 L12 0.5 L15.5 2 L15.5 13.5 L8 15.5 L0.5 13.5 Z" fill="#777"/><path d="M1 2.5 L4 1 L12 1 L15 2.5 L8 4.5 Z" fill="#d8b860"/><path d="M8 4.5 L15 2.5 L15 13 L8 15 Z" fill="#b06a00"/><path d="M1 2.5 L8 4.5 L8 15 L1 13 Z" fill="#6a6a00"/><rect x="2.5" y="3.5" width="2" height="2" fill="#803010"/></svg></div>
<div class="a tx" style="left:166px;top:400.0px;color:#000">3</div>
<div class="a tx" style="left:228.5px;top:400.0px;color:#000">M1</div>
<div class="a lk" style="left:322px;top:400.8px;line-height:11.5px"><u>Bacon</u></div>
<div class="a tx" style="right:1068px;top:400.0px;color:#1010e0">13</div>
<div class="a tx" style="right:966.5px;top:400.0px;color:#000">102.00</div>
<div class="a tx" style="right:874px;top:400.0px;color:#1010e0">102.00</div>
<div class="a tx" style="right:798px;top:400.0px;color:#000">0</div>
<div class="a tx" style="right:643px;top:400.0px;color:#000">0</div>
<div class="a tx" style="right:360px;top:400.0px;color:#000">1326</div>
<div class="a tx" style="right:267.5px;top:400.0px;color:#000">915</div>
<div class="a tx" style="right:59px;top:400.0px;color:#1010e0">0</div>
<div class="a tx" style="left:166px;top:420.0px;color:#000">4</div>
<div class="a tx" style="left:228.5px;top:420.0px;color:#000">V17</div>
<div class="a lk" style="left:322px;top:420.8px;line-height:11.5px"><u>Banana</u></div>
<div class="a tx" style="right:1068px;top:420.0px;color:#1010e0">3</div>
<div class="a tx" style="right:966.5px;top:420.0px;color:#000">10.65</div>
<div class="a tx" style="right:874px;top:420.0px;color:#1010e0">10.65</div>
<div class="a tx" style="right:798px;top:420.0px;color:#000">0</div>
<div class="a tx" style="right:643px;top:420.0px;color:#000">0.00</div>
<div class="a tx" style="right:360px;top:420.0px;color:#000">31.95</div>
<div class="a tx" style="right:267.5px;top:420.0px;color:#000">911</div>
<div class="a tx" style="right:59px;top:420.0px;color:#1010e0">0</div>
<div class="a tx" style="left:166px;top:440.0px;color:#000">5</div>
<div class="a tx" style="left:228.5px;top:440.0px;color:#000">V04</div>
<div class="a lk" style="left:322px;top:440.8px;line-height:11.5px"><u>Garlic</u></div>
<div class="a tx" style="right:1068px;top:440.0px;color:#1010e0">5</div>
<div class="a tx" style="right:966.5px;top:440.0px;color:#000">34.00</div>
<div class="a tx" style="right:874px;top:440.0px;color:#1010e0">34.00</div>
<div class="a tx" style="right:798px;top:440.0px;color:#000">0</div>
<div class="a tx" style="right:643px;top:440.0px;color:#000">0.00</div>
<div class="a tx" style="right:360px;top:440.0px;color:#000">170.00</div>
<div class="a tx" style="right:267.5px;top:440.0px;color:#000">929</div>
<div class="a tx" style="right:59px;top:440.0px;color:#1010e0">0</div>
<div class="a tx" style="left:166px;top:460.0px;color:#000">6</div>
<div class="a tx" style="left:228.5px;top:460.0px;color:#000">V13</div>
<div class="a lk" style="left:322px;top:460.8px;line-height:11.5px"><u>Pineapple</u></div>
<div class="a tx" style="right:1068px;top:460.0px;color:#1010e0">3</div>
<div class="a tx" style="right:966.5px;top:460.0px;color:#000">0.00</div>
<div class="a tx" style="right:874px;top:460.0px;color:#1010e0">0.00</div>
<div class="a tx" style="right:798px;top:460.0px;color:#000">0</div>
<div class="a tx" style="right:643px;top:460.0px;color:#000">0.00</div>
<div class="a tx" style="right:360px;top:460.0px;color:#000">0.00</div>
<div class="a tx" style="right:267.5px;top:460.0px;color:#000">988</div>
<div class="a tx" style="right:59px;top:460.0px;color:#1010e0">0</div>
<div class="a" style="left:1444px;top:302px"><svg width="17" height="16" viewBox="0 0 17 16"><rect width="17" height="16" fill="#17300c"/><text x="8.5" y="12" font-family="Liberation Mono" font-size="9" font-weight="bold" fill="#fff" text-anchor="middle" letter-spacing="-1">BOM</text></svg></div>
<div class="a" style="left:1490px;top:304px"><svg width="18" height="12" viewBox="0 0 18 12"><path d="M4 2.2 Q10 -0.5 16.5 4.5" fill="none" stroke="#c4c4c4" stroke-width="1.3"/><path d="M2.5 5 Q8 1.8 16 6.5 Q10 11 4 8.5 Z" fill="#fff"/><circle cx="9" cy="5.6" r="2.9" fill="#1a8c8c"/><circle cx="8.8" cy="6" r="1.4" fill="#000"/><path d="M1.5 4.8 Q6 1.8 11 2.3 L16.8 6.6" fill="none" stroke="#000" stroke-width="1.8"/><path d="M4 8 Q9 11.8 14 8.5" fill="none" stroke="#9a9a9a" stroke-width="1.2"/><path d="M7 10 H11.5" stroke="#222" stroke-width="1.2"/></svg></div>
<div class="a" style="left:1535px;top:302px"><svg width="14" height="16" viewBox="0 0 14 16"><rect x="0.5" y="0.5" width="13" height="15" fill="#fff" stroke="#000"/><path d="M2.5 3.5H11.5M2.5 5.5H11.5M2.5 7.5H11.5M2.5 9.5H11.5M2.5 11.5H11.5M2.5 13.5H11.5" fill="none" stroke="#000" stroke-width="1"/></svg></div>
<div class="a" style="left:1652px;top:302px"><svg width="12" height="16" viewBox="0 0 12 16"><path d="M4 1.5H8M1 3H11" stroke="#000" stroke-width="1.6"/><path d="M2 4 L3 15 H9 L10 4" fill="#fff" stroke="#000" stroke-width="1.4"/><path d="M4.5 5.5V13.5M7.5 5.5V13.5" stroke="#000" stroke-width="1.2"/></svg></div>
<div class="a" style="left:1490px;top:336px"><svg width="18" height="12" viewBox="0 0 18 12"><path d="M4 2.2 Q10 -0.5 16.5 4.5" fill="none" stroke="#c4c4c4" stroke-width="1.3"/><path d="M2.5 5 Q8 1.8 16 6.5 Q10 11 4 8.5 Z" fill="#fff"/><circle cx="9" cy="5.6" r="2.9" fill="#1a8c8c"/><circle cx="8.8" cy="6" r="1.4" fill="#000"/><path d="M1.5 4.8 Q6 1.8 11 2.3 L16.8 6.6" fill="none" stroke="#000" stroke-width="1.8"/><path d="M4 8 Q9 11.8 14 8.5" fill="none" stroke="#9a9a9a" stroke-width="1.2"/><path d="M7 10 H11.5" stroke="#222" stroke-width="1.2"/></svg></div>
<div class="a" style="left:1534px;top:334px"><svg width="14" height="16" viewBox="0 0 14 16"><rect x="0.5" y="0.5" width="13" height="15" fill="#fff" stroke="#000"/><path d="M2.5 3.5H11.5M2.5 5.5H11.5M2.5 7.5H11.5M2.5 9.5H11.5M2.5 11.5H11.5M2.5 13.5H11.5" fill="none" stroke="#000" stroke-width="1"/></svg></div>
<div class="a" style="left:1652px;top:334px"><svg width="12" height="16" viewBox="0 0 12 16"><path d="M4 1.5H8M1 3H11" stroke="#000" stroke-width="1.6"/><path d="M2 4 L3 15 H9 L10 4" fill="#fff" stroke="#000" stroke-width="1.4"/><path d="M4.5 5.5V13.5M7.5 5.5V13.5" stroke="#000" stroke-width="1.2"/></svg></div>
<div class="a" style="left:1490px;top:374px"><svg width="18" height="12" viewBox="0 0 18 12"><path d="M4 2.2 Q10 -0.5 16.5 4.5" fill="none" stroke="#c4c4c4" stroke-width="1.3"/><path d="M2.5 5 Q8 1.8 16 6.5 Q10 11 4 8.5 Z" fill="#fff"/><circle cx="9" cy="5.6" r="2.9" fill="#1a8c8c"/><circle cx="8.8" cy="6" r="1.4" fill="#000"/><path d="M1.5 4.8 Q6 1.8 11 2.3 L16.8 6.6" fill="none" stroke="#000" stroke-width="1.8"/><path d="M4 8 Q9 11.8 14 8.5" fill="none" stroke="#9a9a9a" stroke-width="1.2"/><path d="M7 10 H11.5" stroke="#222" stroke-width="1.2"/></svg></div>
<div class="a" style="left:1534px;top:372px"><svg width="14" height="16" viewBox="0 0 14 16"><rect x="0.5" y="0.5" width="13" height="15" fill="#fff" stroke="#000"/><path d="M2.5 3.5H11.5M2.5 5.5H11.5M2.5 7.5H11.5M2.5 9.5H11.5M2.5 11.5H11.5M2.5 13.5H11.5" fill="none" stroke="#000" stroke-width="1"/></svg></div>
<div class="a" style="left:1652px;top:372px"><svg width="12" height="16" viewBox="0 0 12 16"><path d="M4 1.5H8M1 3H11" stroke="#000" stroke-width="1.6"/><path d="M2 4 L3 15 H9 L10 4" fill="#fff" stroke="#000" stroke-width="1.4"/><path d="M4.5 5.5V13.5M7.5 5.5V13.5" stroke="#000" stroke-width="1.2"/></svg></div>
<div class="a" style="left:1490px;top:400px"><svg width="18" height="12" viewBox="0 0 18 12"><path d="M4 2.2 Q10 -0.5 16.5 4.5" fill="none" stroke="#c4c4c4" stroke-width="1.3"/><path d="M2.5 5 Q8 1.8 16 6.5 Q10 11 4 8.5 Z" fill="#fff"/><circle cx="9" cy="5.6" r="2.9" fill="#1a8c8c"/><circle cx="8.8" cy="6" r="1.4" fill="#000"/><path d="M1.5 4.8 Q6 1.8 11 2.3 L16.8 6.6" fill="none" stroke="#000" stroke-width="1.8"/><path d="M4 8 Q9 11.8 14 8.5" fill="none" stroke="#9a9a9a" stroke-width="1.2"/><path d="M7 10 H11.5" stroke="#222" stroke-width="1.2"/></svg></div>
<div class="a" style="left:1534px;top:398px"><svg width="14" height="16" viewBox="0 0 14 16"><rect x="0.5" y="0.5" width="13" height="15" fill="#fff" stroke="#000"/><path d="M2.5 3.5H11.5M2.5 5.5H11.5M2.5 7.5H11.5M2.5 9.5H11.5M2.5 11.5H11.5M2.5 13.5H11.5" fill="none" stroke="#000" stroke-width="1"/></svg></div>
<div class="a" style="left:1652px;top:398px"><svg width="12" height="16" viewBox="0 0 12 16"><path d="M4 1.5H8M1 3H11" stroke="#000" stroke-width="1.6"/><path d="M2 4 L3 15 H9 L10 4" fill="#fff" stroke="#000" stroke-width="1.4"/><path d="M4.5 5.5V13.5M7.5 5.5V13.5" stroke="#000" stroke-width="1.2"/></svg></div>
<div class="a" style="left:1490px;top:420px"><svg width="18" height="12" viewBox="0 0 18 12"><path d="M4 2.2 Q10 -0.5 16.5 4.5" fill="none" stroke="#c4c4c4" stroke-width="1.3"/><path d="M2.5 5 Q8 1.8 16 6.5 Q10 11 4 8.5 Z" fill="#fff"/><circle cx="9" cy="5.6" r="2.9" fill="#1a8c8c"/><circle cx="8.8" cy="6" r="1.4" fill="#000"/><path d="M1.5 4.8 Q6 1.8 11 2.3 L16.8 6.6" fill="none" stroke="#000" stroke-width="1.8"/><path d="M4 8 Q9 11.8 14 8.5" fill="none" stroke="#9a9a9a" stroke-width="1.2"/><path d="M7 10 H11.5" stroke="#222" stroke-width="1.2"/></svg></div>
<div class="a" style="left:1534px;top:418px"><svg width="14" height="16" viewBox="0 0 14 16"><rect x="0.5" y="0.5" width="13" height="15" fill="#fff" stroke="#000"/><path d="M2.5 3.5H11.5M2.5 5.5H11.5M2.5 7.5H11.5M2.5 9.5H11.5M2.5 11.5H11.5M2.5 13.5H11.5" fill="none" stroke="#000" stroke-width="1"/></svg></div>
<div class="a" style="left:1652px;top:418px"><svg width="12" height="16" viewBox="0 0 12 16"><path d="M4 1.5H8M1 3H11" stroke="#000" stroke-width="1.6"/><path d="M2 4 L3 15 H9 L10 4" fill="#fff" stroke="#000" stroke-width="1.4"/><path d="M4.5 5.5V13.5M7.5 5.5V13.5" stroke="#000" stroke-width="1.2"/></svg></div>
<div class="a" style="left:1490px;top:440px"><svg width="18" height="12" viewBox="0 0 18 12"><path d="M4 2.2 Q10 -0.5 16.5 4.5" fill="none" stroke="#c4c4c4" stroke-width="1.3"/><path d="M2.5 5 Q8 1.8 16 6.5 Q10 11 4 8.5 Z" fill="#fff"/><circle cx="9" cy="5.6" r="2.9" fill="#1a8c8c"/><circle cx="8.8" cy="6" r="1.4" fill="#000"/><path d="M1.5 4.8 Q6 1.8 11 2.3 L16.8 6.6" fill="none" stroke="#000" stroke-width="1.8"/><path d="M4 8 Q9 11.8 14 8.5" fill="none" stroke="#9a9a9a" stroke-width="1.2"/><path d="M7 10 H11.5" stroke="#222" stroke-width="1.2"/></svg></div>
<div class="a" style="left:1534px;top:438px"><svg width="14" height="16" viewBox="0 0 14 16"><rect x="0.5" y="0.5" width="13" height="15" fill="#fff" stroke="#000"/><path d="M2.5 3.5H11.5M2.5 5.5H11.5M2.5 7.5H11.5M2.5 9.5H11.5M2.5 11.5H11.5M2.5 13.5H11.5" fill="none" stroke="#000" stroke-width="1"/></svg></div>
<div class="a" style="left:1652px;top:438px"><svg width="12" height="16" viewBox="0 0 12 16"><path d="M4 1.5H8M1 3H11" stroke="#000" stroke-width="1.6"/><path d="M2 4 L3 15 H9 L10 4" fill="#fff" stroke="#000" stroke-width="1.4"/><path d="M4.5 5.5V13.5M7.5 5.5V13.5" stroke="#000" stroke-width="1.2"/></svg></div>
<div class="a" style="left:1490px;top:460px"><svg width="18" height="12" viewBox="0 0 18 12"><path d="M4 2.2 Q10 -0.5 16.5 4.5" fill="none" stroke="#c4c4c4" stroke-width="1.3"/><path d="M2.5 5 Q8 1.8 16 6.5 Q10 11 4 8.5 Z" fill="#fff"/><circle cx="9" cy="5.6" r="2.9" fill="#1a8c8c"/><circle cx="8.8" cy="6" r="1.4" fill="#000"/><path d="M1.5 4.8 Q6 1.8 11 2.3 L16.8 6.6" fill="none" stroke="#000" stroke-width="1.8"/><path d="M4 8 Q9 11.8 14 8.5" fill="none" stroke="#9a9a9a" stroke-width="1.2"/><path d="M7 10 H11.5" stroke="#222" stroke-width="1.2"/></svg></div>
<div class="a" style="left:1534px;top:458px"><svg width="14" height="16" viewBox="0 0 14 16"><rect x="0.5" y="0.5" width="13" height="15" fill="#fff" stroke="#000"/><path d="M2.5 3.5H11.5M2.5 5.5H11.5M2.5 7.5H11.5M2.5 9.5H11.5M2.5 11.5H11.5M2.5 13.5H11.5" fill="none" stroke="#000" stroke-width="1"/></svg></div>
<div class="a" style="left:1652px;top:458px"><svg width="12" height="16" viewBox="0 0 12 16"><path d="M4 1.5H8M1 3H11" stroke="#000" stroke-width="1.6"/><path d="M2 4 L3 15 H9 L10 4" fill="#fff" stroke="#000" stroke-width="1.4"/><path d="M4.5 5.5V13.5M7.5 5.5V13.5" stroke="#000" stroke-width="1.2"/></svg></div>
<div class="a" style="left:221px;top:395px;width:510px;height:23px;border:3px solid #e9a526"></div>
<!--/TABLE-->
</body></html>
